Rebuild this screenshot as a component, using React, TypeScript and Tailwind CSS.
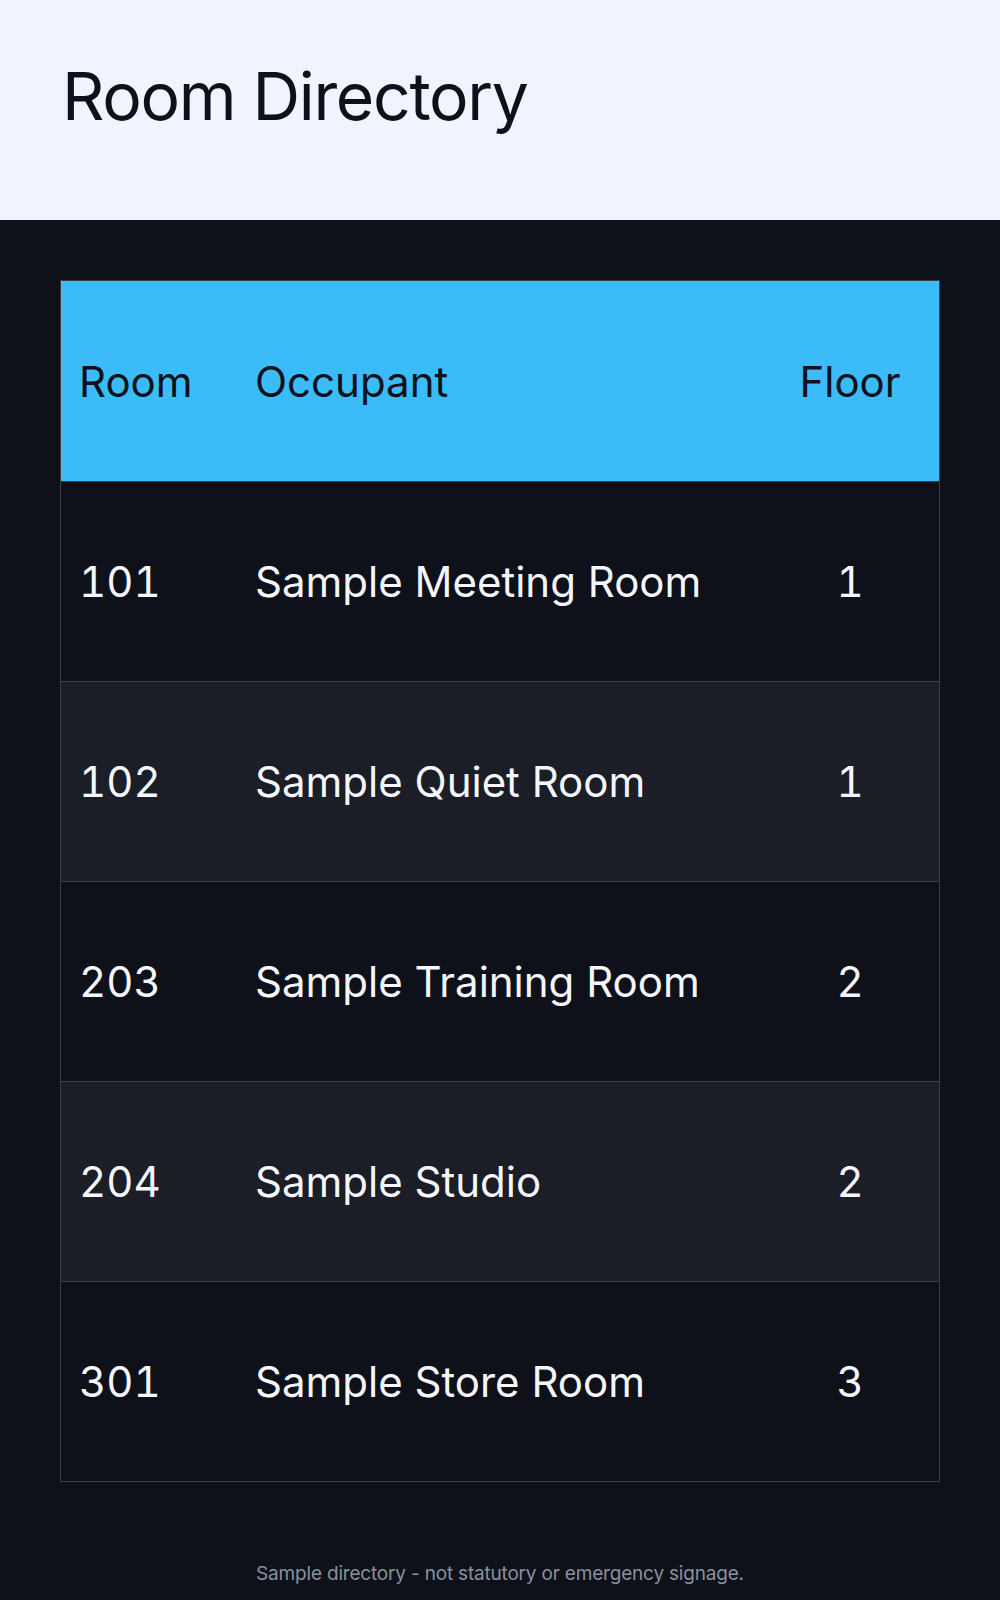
import React from 'react';

type Room = {
  number: string;
  occupant: string;
  floor: number;
};

const rooms: Room[] = [
  { number: '101', occupant: 'Sample Meeting Room', floor: 1 },
  { number: '102', occupant: 'Sample Quiet Room', floor: 1 },
  { number: '203', occupant: 'Sample Training Room', floor: 2 },
  { number: '204', occupant: 'Sample Studio', floor: 2 },
  { number: '301', occupant: 'Sample Store Room', floor: 3 },
];

const App = () => {
  return (
    <div className="min-h-[1600px] bg-[#0e1119] font-['Inter','Liberation_Sans',sans-serif]">
      <header className="h-[220px] bg-[#eff4fe] px-[62px] pt-[56px]">
        <h1 className="text-[66px] leading-[80px] tracking-[-0.02em] text-[#0d111a]">Room Directory</h1>
      </header>

      <main className="px-[60px] pt-[60px] pb-[40px]">
        <div className="border border-[#3a3d47]">
          {/* Header row */}
          <div className="grid h-[200px] grid-cols-[176px_1fr_178px] items-center bg-[#3bbcf8] text-[42px] text-[#0d111a]">
            <div className="pl-[18px]">Room</div>
            <div className="pl-[18px]">Occupant</div>
            <div className="text-center">Floor</div>
          </div>

          {rooms.map((room, i) => (
            <div
              key={room.number}
              className={`grid h-[200px] grid-cols-[176px_1fr_178px] items-center border-t border-[#3a3d47] text-[42px] text-[#f4f6fb] ${
                i % 2 === 1 ? 'bg-[#1b1e27]' : 'bg-[#0e1119]'
              }`}
            >
              <div className="pl-[18px] tabular-nums">{room.number}</div>
              <div className="pl-[18px]">{room.occupant}</div>
              <div className="text-center tabular-nums">{room.floor}</div>
            </div>
          ))}
        </div>

        <p className="mt-[78px] text-center text-[19px] leading-[28px] tracking-[-0.01em] text-[#8a909e]">
          Sample directory - not statutory or emergency signage.
        </p>
      </main>
    </div>
  );
};

export default App;
